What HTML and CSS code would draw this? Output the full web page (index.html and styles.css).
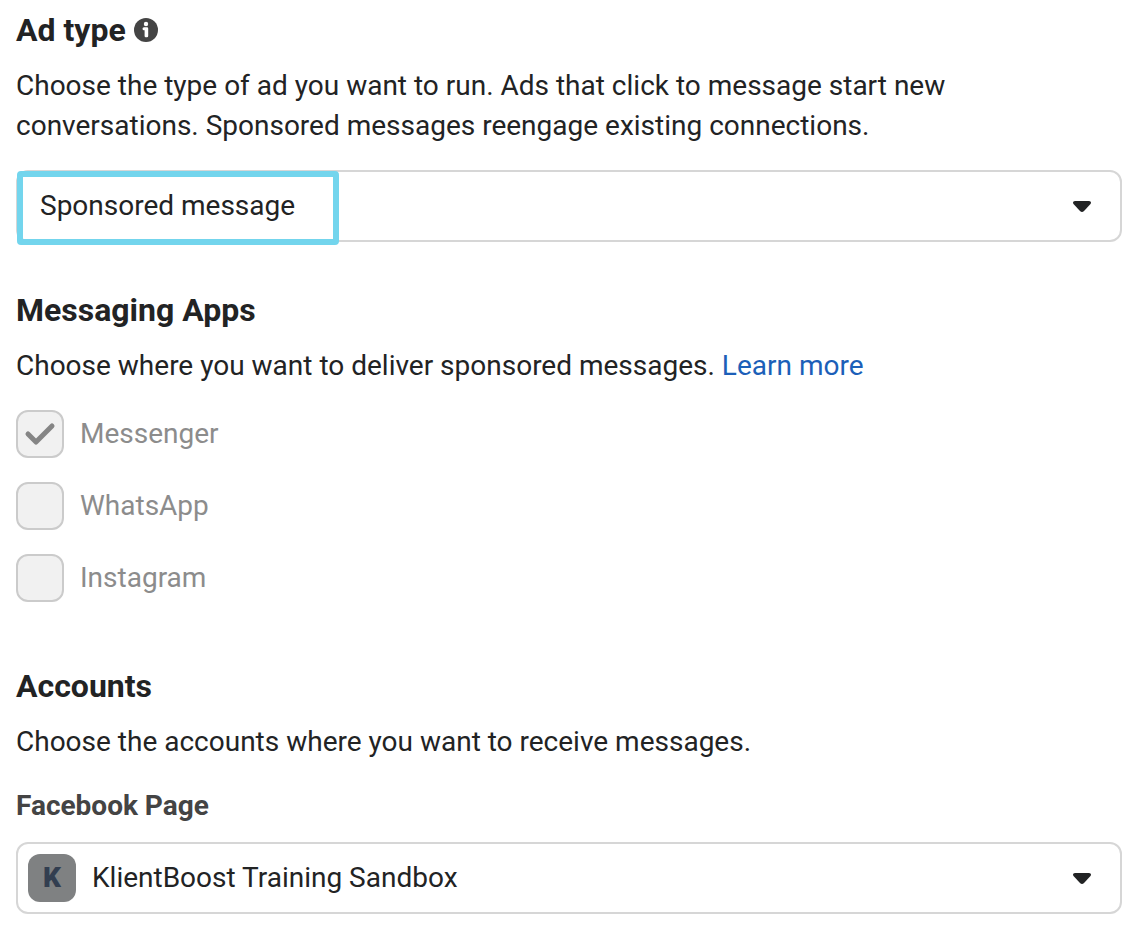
FILE: index.html
```html
<!DOCTYPE html>
<html lang="en">
<head>
  <meta charset="UTF-8" />
  <meta name="viewport" content="width=device-width, initial-scale=1.0" />
  <title>Ad type</title>
  <link rel="stylesheet" href="styles.css">
</head>
<body>
  <main>
    <!-- Ad type -->
    <section class="block ad-type">
      <h2>
        <label for="adType">Ad type</label>
        <svg class="info" viewBox="0 0 24 24" aria-hidden="true">
          <circle cx="12" cy="12" r="12" />
          <circle class="mark" cx="12" cy="6" r="2.200" />
          <path class="mark" d="M10 9.200h3q1.200 0 1.200 1.200v7.600q0 1.200-1.200 1.200h-1.200q-1.200 0-1.200-1.200V12.200h-.600q-1.500 0-1.500-1.500t1.500-1.500z" />
        </svg>
      </h2>
      <p>Choose the type of ad you want to run. Ads that click to message start new conversations. Sponsored messages reengage existing connections.</p>
      <div class="select-box">
        <select id="adType">
          <option>Sponsored message</option>
        </select>
        <svg class="arrow" viewBox="0 0 18 11" aria-hidden="true">
          <path d="M2 0h14q3 .500 1.500 3l-6.500 7q-2 2-4 0L.500 3Q-1 .500 2 0z" />
        </svg>
        <span class="highlight"></span>
      </div>
    </section>

    <!-- Messaging apps -->
    <section class="block apps">
      <h2>Messaging Apps</h2>
      <p>Choose where you want to deliver sponsored messages. <a href="#">Learn more</a></p>
      <div class="options">
        <label>
          <span class="check-box">
            <input type="checkbox" checked disabled />
            <svg class="check" viewBox="0 0 48 48" aria-hidden="true">
              <path d="M12 24l8 8L36 16" />
            </svg>
          </span>
          Messenger
        </label>
        <label><span class="check-box"><input type="checkbox" disabled /></span>WhatsApp</label>
        <label><span class="check-box"><input type="checkbox" disabled /></span>Instagram</label>
      </div>
    </section>

    <!-- Accounts -->
    <section class="block">
      <h2>Accounts</h2>
      <p>Choose the accounts where you want to receive messages.</p>
      <label class="field-label" for="page">Facebook Page</label>
      <div class="select-box">
        <select id="page" class="with-avatar">
          <option>KlientBoost Training Sandbox</option>
        </select>
        <span class="avatar">K</span>
        <svg class="arrow" viewBox="0 0 18 11" aria-hidden="true">
          <path d="M2 0h14q3 .500 1.500 3l-6.500 7q-2 2-4 0L.500 3Q-1 .500 2 0z" />
        </svg>
      </div>
    </section>
  </main>
</body>
</html>
```

FILE: styles.css
```css
:root {
  --text-color: #222324;
  --label-color: #444;
  --muted-color: #8c8c8c;
  --border-color: #d6d6d6;
  --link-color: #1c5fb8;
  --highlight-color: #73d5ed;
}

* {
  box-sizing: border-box;
  margin: 0;
  padding: 0;
}

body {
  background-color: #fff;
  color: var(--text-color);
  font-family: Roboto, "Liberation Sans", sans-serif;
  font-size: 28px;
  line-height: 40px;
}

main {
  padding: 10px 14px 26px 16px;
}

h2 {
  display: flex;
  align-items: center;
  gap: 8px;
  font-size: 32px;
  font-weight: 700;
  line-height: 40px;
  margin-bottom: 16px;
}

.info {
  width: 24px;
  height: 24px;
  fill: var(--label-color);
}

.info .mark {
  fill: #fff;
}

.block p {
  max-width: 960px;
}

.ad-type {
  margin-bottom: 48px;
}

.apps {
  margin-bottom: 64px;
}

a {
  color: var(--link-color);
  text-decoration: none;
}

.select-box {
  position: relative;
  margin-top: 24px;
}

select {
  appearance: none;
  display: block;
  width: 100%;
  height: 72px;
  padding: 0 64px 0 22px;
  border: 2px solid var(--border-color);
  border-radius: 12px;
  background-color: #fff;
  color: var(--text-color);
  font: inherit;
}

.with-avatar {
  padding-left: 74px;
}

.arrow {
  position: absolute;
  right: 31px;
  top: 31px;
  width: 18px;
  height: 11px;
  fill: var(--text-color);
  pointer-events: none;
}

.highlight {
  position: absolute;
  left: 1px;
  top: 1px;
  width: 322px;
  height: 74px;
  border: 6px solid var(--highlight-color);
  border-radius: 4px;
  pointer-events: none;
}

.options {
  display: flex;
  flex-direction: column;
  gap: 24px;
  margin-top: 24px;
}

.options label {
  display: flex;
  align-items: center;
  gap: 16px;
  height: 48px;
  color: var(--muted-color);
}

.check-box {
  position: relative;
  width: 48px;
  height: 48px;
}

.check-box input {
  appearance: none;
  display: block;
  width: 48px;
  height: 48px;
  border: 2px solid #cbcbcb;
  border-radius: 12px;
  background-color: #f1f1f1;
}

.check {
  position: absolute;
  inset: 0;
  fill: none;
  stroke: #858585;
  stroke-width: 5px;
  stroke-linecap: round;
  stroke-linejoin: round;
}

.field-label {
  display: block;
  margin-top: 24px;
  color: var(--label-color);
  font-weight: 700;
}

.field-label + .select-box {
  margin-top: 16px;
}

.avatar {
  position: absolute;
  left: 12px;
  top: 12px;
  width: 48px;
  height: 48px;
  border-radius: 12px;
  background-color: #7f8182;
  color: #323e50;
  font-weight: 900;
  line-height: 48px;
  text-align: center;
  pointer-events: none;
}
```
